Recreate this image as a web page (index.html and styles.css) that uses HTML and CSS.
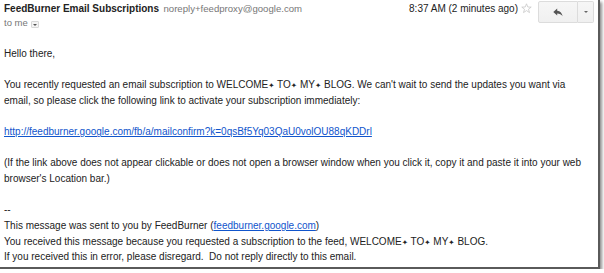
FILE: index.html
```html
<!DOCTYPE html>
<html>
  <head>
    <title>FeedBurner Email Subscriptions</title>
    <link rel="stylesheet" href="styles.css">
  </head>
  <body>
    <div class="msg">
      <div class="head">
        <div class="from">
          <div class="sender">
            <span class="name">FeedBurner Email Subscriptions</span>
            <span class="addr">noreply+feedproxy@google.com</span>
          </div>
          <div class="to">to me <span class="to-menu"></span></div>
        </div>
        <div class="meta">
          <span class="time">8:37 AM (2 minutes ago)</span>
          <svg class="star" width="11" height="11" viewBox="0 0 11 11">
            <path d="M5.5 0.8 L6.8 4 L10.2 4.1 L7.5 6.2 L8.5 9.6 L5.5 7.6 L2.5 9.6 L3.5 6.2 L0.8 4.1 L4.2 4 Z" fill="none" stroke="#c8c8c8" stroke-width="0.8" stroke-linejoin="round"/>
          </svg>
          <div class="actions">
            <button class="btn-reply">
              <svg width="10" height="9" viewBox="0 0 10 9">
                <path d="M4.2 0.5 L0.3 4 L4.2 7.5 V5.4 C6.6 5.4 8.3 6.2 9.6 8.3 C9.1 5.2 7.4 3 4.2 2.7 Z" fill="#555"/>
              </svg>
            </button>
            <button class="btn-more"><span class="caret"></span></button>
          </div>
        </div>
      </div>

      <div class="body">
        Hello there,<br>
        <br>
        You recently requested an email subscription to WELCOME<span class="sym">✦</span> TO<span class="sym">✦</span> MY<span class="sym">✦</span> BLOG. We can't wait to send the updates you want via email, so please click the following link to activate your subscription immediately:<br>
        <br>
        <a href="#">http://feedburner.google.com/fb/a/mailconfirm?k=0qsBf5Yq03QaU0volOU88qKDDrl</a><br>
        <br>
        (If the link above does not appear clickable or does not open a browser window when you click it, copy it and paste it into your web browser's Location bar.)<br>
        <br>
        --<br>
        This message was sent to you by FeedBurner (<a href="#">feedburner.google.com</a>)<br>
        You received this message because you requested a subscription to the feed, WELCOME<span class="sym">✦</span> TO<span class="sym">✦</span> MY<span class="sym">✦</span> BLOG.<br>
        If you received this in error, please disregard.&nbsp; Do not reply directly to this email.
      </div>
    </div>
  </body>
</html>
```

FILE: styles.css
```css
body {
  margin: 0;
  background: #fff;
  font-family: "Liberation Sans", Arial, sans-serif;
  color: #222;
}

.msg {
  width: 598px;
  height: 267px;
  background: #fff;
  border-right: 2px solid #5a5a5a;
  border-bottom: 2px solid #5a5a5a;
  box-shadow: 2px 2px 3px rgba(0, 0, 0, 0.45);
  overflow: hidden;
}

.head {
  display: flex;
  justify-content: space-between;
  align-items: flex-start;
  padding: 0 4px;
}

.sender {
  line-height: 13px;
  white-space: nowrap;
}

.name {
  font-size: 10px;
  font-weight: bold;
  color: #222;
}

.addr {
  font-size: 9.6px;
  color: #777;
}

.to {
  margin-top: 1px;
  font-size: 9.5px;
  line-height: 13px;
  color: #777;
  display: flex;
  align-items: center;
  gap: 3px;
}

.to-menu {
  position: relative;
  display: inline-block;
  width: 6px;
  height: 5px;
  margin-top: 4px;
  border: 1px solid #d8d8d8;
  border-radius: 1px;
  background: #f4f4f4;
}

.to-menu::after {
  content: "";
  position: absolute;
  left: 1px;
  top: 2px;
  border-left: 2px solid transparent;
  border-right: 2px solid transparent;
  border-top: 2px solid #555;
}

.meta {
  display: flex;
  align-items: flex-start;
  margin-top: 1px;
}

.time {
  font-size: 10px;
  line-height: 13px;
  color: #222;
  margin-top: 1px;
}

.star {
  margin: 2px 6px 0 3px;
}

.actions {
  display: flex;
}

.actions button {
  height: 22px;
  border: 1px solid #dcdcdc;
  background: linear-gradient(#f6f6f6, #f0f0f0);
  padding: 0;
  display: flex;
  align-items: center;
  justify-content: center;
}

.btn-reply {
  width: 40px;
  border-radius: 2px 0 0 2px;
}

.btn-more {
  width: 16px;
  border-left: none !important;
  border-radius: 0 2px 2px 0;
}

.caret {
  border-left: 2px solid transparent;
  border-right: 2px solid transparent;
  border-top: 2px solid #666;
}

.body {
  margin-top: 17px;
  padding: 0 4px;
  width: 586px;
  font-size: 10px;
  line-height: 15.64px;
  color: #222;
}

.body a {
  color: #15c;
}

.sym {
  font-family: "DejaVu Sans", sans-serif;
  font-size: 7.5px;
  line-height: 1;
}
```
